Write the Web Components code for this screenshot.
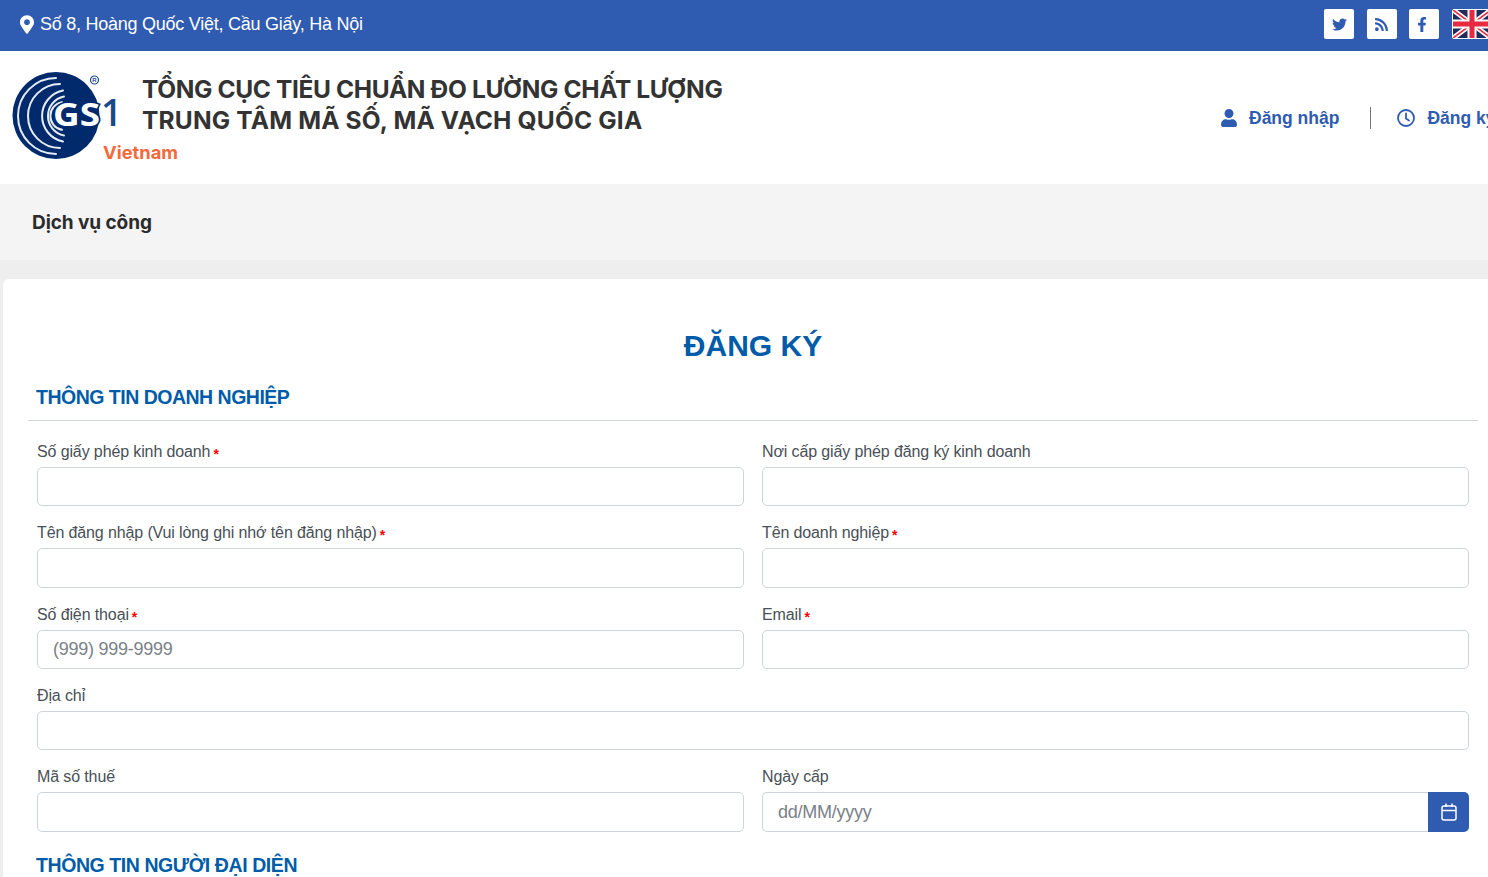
<!DOCTYPE html>
<html lang="vi"><head><meta charset="utf-8"><title>Đăng ký</title>
<style>
html,body{margin:0;padding:0;height:877px;overflow:hidden;background:#eee}
body{font-family:"Liberation Sans",Arial,sans-serif;color:#495057}
#page{width:1510px;display:block}
</style></head>
<body>
<div id="page">
<top-bar address="Số 8, Hoàng Quốc Việt, Cầu Giấy, Hà Nội"></top-bar>
<site-header></site-header>
<nav-band>Dịch vụ công</nav-band>
<form-card>
  <form-title>ĐĂNG KÝ</form-title>
  <section-head>THÔNG TIN DOANH NGHIỆP</section-head>
  <form-grid>
    <form-field label="Số giấy phép kinh doanh" required></form-field>
    <form-field label="Nơi cấp giấy phép đăng ký kinh doanh"></form-field>
    <form-field label="Tên đăng nhập (Vui lòng ghi nhớ tên đăng nhập)" required></form-field>
    <form-field label="Tên doanh nghiệp" required></form-field>
    <form-field label="Số điện thoại" required placeholder="(999) 999-9999"></form-field>
    <form-field label="Email" required></form-field>
    <form-field label="Địa chỉ" wide></form-field>
    <form-field label="Mã số thuế"></form-field>
    <form-field label="Ngày cấp" placeholder="dd/MM/yyyy" date></form-field>
  </form-grid>
  <section-head second>THÔNG TIN NGƯỜI ĐẠI DIỆN</section-head>
</form-card>
</div>
<script>
function def(name,html,init){
  customElements.define(name,class extends HTMLElement{
    constructor(){super();this.attachShadow({mode:'open'}).innerHTML=html;}
    connectedCallback(){if(init)init(this,this.shadowRoot);}
  });
}
const B='#2f5bb1';
def('top-bar',`<style>
:host{display:flex;align-items:center;justify-content:space-between;height:51px;background:${B};color:#fff;font-size:18px;padding:0 18px 0 20px;box-sizing:border-box;letter-spacing:-.25px}
.a{display:flex;align-items:center;gap:6px;margin-top:-2px}
.a svg{width:14px;height:19px;fill:#fff;display:block}
.r{display:flex;gap:12.67px;align-items:center;margin-top:-3px}
.s{width:30px;height:30px;background:#fff;border-radius:2px;display:flex;align-items:center;justify-content:center}
.s svg{fill:${B};display:block}
.s.fb svg{margin-left:-4px}
.f{width:40px;height:30px;display:block;box-sizing:border-box;border:1px solid #fff;border-radius:2px;background:#fff}
.f svg{display:block;width:100%;height:100%}
</style>
<div class="a"><svg viewBox="0 0 384 512"><path d="M172.268 501.67C26.97 291.031 0 269.413 0 192 0 85.961 85.961 0 192 0s192 85.961 192 192c0 77.413-26.97 99.031-172.268 309.67-9.535 13.774-29.93 13.773-39.464 0zM192 272c44.183 0 80-35.817 80-80s-35.817-80-80-80-80 35.817-80 80 35.817 80 80 80z"/></svg><span id="t"></span></div>
<div class="r">
<span class="s"><svg width="15" height="15" viewBox="0 0 512 512"><path d="M459.37 151.716c.325 4.548.325 9.097.325 13.645 0 138.72-105.583 298.558-298.558 298.558-59.452 0-114.68-17.219-161.137-47.106 8.447.974 16.568 1.299 25.34 1.299 49.055 0 94.213-16.568 130.274-44.832-46.132-.975-84.792-31.188-98.112-72.772 6.498.974 12.995 1.624 19.818 1.624 9.421 0 18.843-1.3 27.614-3.573-48.081-9.747-84.143-51.98-84.143-102.985v-1.299c13.969 7.797 30.214 12.67 47.431 13.319-28.264-18.843-46.781-51.005-46.781-87.391 0-19.492 5.197-37.36 14.294-52.954 51.655 63.675 129.3 105.258 216.365 109.807-1.624-7.797-2.599-15.918-2.599-24.04 0-57.828 46.782-104.934 104.934-104.934 30.213 0 57.502 12.67 76.67 33.137 23.715-4.548 46.456-13.32 66.599-25.34-7.798 24.366-24.366 44.833-46.132 57.827 21.117-2.273 41.584-8.122 60.426-16.243-14.292 20.791-32.161 39.308-52.628 54.253z"/></svg></span>
<span class="s"><svg width="13" height="15" viewBox="0 0 448 512"><path d="M128.081 415.959c0 35.369-28.672 64.041-64.041 64.041S0 451.328 0 415.959s28.672-64.041 64.041-64.041 64.04 28.673 64.04 64.041zm175.66 47.25c-8.354-154.6-132.185-278.587-286.95-286.95C7.656 175.765 0 183.105 0 192.253v48.069c0 8.415 6.49 15.472 14.887 16.018 111.832 7.284 201.473 96.702 208.772 208.772.547 8.397 7.604 14.887 16.018 14.887h48.069c9.149.001 16.489-7.655 15.995-16.79zm144.249.288C439.596 229.677 251.465 40.445 16.503 32.01 7.473 31.686 0 38.981 0 48.016v48.068c0 8.625 6.835 15.645 15.453 15.999 191.179 7.839 344.627 161.316 352.465 352.465.353 8.618 7.373 15.453 15.999 15.453h48.068c9.034-.001 16.329-7.474 16.005-16.504z"/></svg></span>
<span class="s fb"><svg width="10" height="15" viewBox="0 0 320 512"><path d="M279.14 288l14.22-92.66h-88.91v-60.13c0-25.35 12.42-50.06 52.24-50.06h40.42V6.26S260.43 0 225.36 0c-73.22 0-121.08 44.38-121.08 124.72v70.62H22.89V288h81.39v224h100.17V288z"/></svg></span>
<span class="f"><svg viewBox="0 0 38 28" preserveAspectRatio="none"><rect width="38" height="28" fill="#232a5c"/><path d="M0 0L38 28M38 0L0 28" stroke="#fff" stroke-width="5"/><path d="M0 0L38 28M38 0L0 28" stroke="#e8293f" stroke-width="1.6"/><path d="M19 0V28M0 14H38" stroke="#fff" stroke-width="9"/><path d="M19 0V28M0 14H38" stroke="#e8293f" stroke-width="5"/></svg></span>
</div>`,(h,s)=>{s.getElementById('t').textContent=h.getAttribute('address');});

def('gs-logo',`<style>:host{display:block;width:170px;height:92px}svg{display:block}</style>
<svg width="170" height="92" viewBox="0 0 170 92" style="overflow:visible">
<circle cx="44" cy="43.5" r="43.5" fill="#012a6c"/>
<g fill="none" stroke="#e6ecf5" stroke-width="2" stroke-linecap="round">
<path d="M44 6A38 38 0 0 0 44 82"/>
<path d="M48 12A32 32 0 0 0 48 76"/>
<path d="M51 18.5A26 26 0 0 0 51 69.5"/>
<path d="M52 24.4A20 20 0 0 0 52 63.6"/>
<path d="M50 30.2A14 14 0 0 0 50 57.8"/>
</g>
<text x="41" y="54" font-family="Open Sans,Liberation Sans,sans-serif" font-weight="700" font-size="32" fill="#fff" stroke="#012a6c" stroke-width="3" paint-order="stroke" textLength="47" lengthAdjust="spacingAndGlyphs">GS</text>
<text x="89" y="54" font-family="Open Sans,Liberation Sans,sans-serif" font-weight="600" font-size="37" fill="#1b4a88">1</text>
<circle cx="82.5" cy="8" r="4" fill="#fff" stroke="#1b4a88" stroke-width="1.2"/><text x="82.5" y="10.2" text-anchor="middle" font-family="Liberation Sans,sans-serif" font-weight="700" font-size="6" fill="#1b4a88">R</text>
<text x="91" y="87" font-family="Inter,Liberation Sans,sans-serif" font-weight="700" font-size="18" fill="#f26a3c" textLength="75" lengthAdjust="spacingAndGlyphs">Vietnam</text>
</svg>`);

def('site-header',`<style>
:host{display:flex;align-items:flex-start;height:133px;background:#fff;box-sizing:border-box;padding:21px 0 0 12px;position:relative}
gs-logo{flex:none}
.ttl{margin-left:-40px;padding-top:2px;font:700 24.5px/31px Inter,"Liberation Sans",sans-serif;color:#333;white-space:nowrap;width:600px}
#a{letter-spacing:-.36px}
#b{letter-spacing:.18px}
.links{margin-left:auto;display:flex;align-items:center;padding-top:35px;font:700 17.5px/22px "Liberation Sans",sans-serif;color:${B};width:289px;box-sizing:border-box}
.l{display:flex;align-items:center;gap:12px;white-space:nowrap}
.l svg{display:block}
.sep{width:1px;height:22px;background:#777;margin:0 26px 0 31px}
</style>
<gs-logo></gs-logo>
<div class="ttl"><div id="a">TỔNG CỤC TIÊU CHUẨN ĐO LƯỜNG CHẤT LƯỢNG</div><div id="b">TRUNG TÂM MÃ SỐ, MÃ VẠCH QUỐC GIA</div></div>
<div class="links">
<span class="l"><svg width="16" height="18" viewBox="0 0 448 512" fill="${B}"><path d="M224 256c70.7 0 128-57.3 128-128S294.7 0 224 0 96 57.3 96 128s57.3 128 128 128zm89.6 32h-16.7c-22.2 10.2-46.9 16-72.9 16s-50.6-5.8-72.9-16h-16.7C60.2 288 0 348.2 0 422.4V464c0 26.5 21.5 48 48 48h352c26.5 0 48-21.5 48-48v-41.6c0-74.2-60.2-134.4-134.4-134.4z"/></svg><span>Đăng nhập</span></span>
<span class="sep"></span>
<span class="l"><svg width="18" height="18" viewBox="0 0 18 18" fill="none" stroke="${B}" stroke-width="1.8"><circle cx="9" cy="9" r="8"/><path d="M9 4.5V9.5L12 11.5" stroke-linecap="round"/></svg><span>Đăng ký</span></span>
</div>`);

def('nav-band',`<style>
:host{display:flex;align-items:center;height:76px;background:#f4f4f4;padding-left:32px;font:700 19px/24px Inter,"Liberation Sans",sans-serif;color:#2b2b2b;letter-spacing:-.08px;margin-bottom:19px;padding-top:1px;box-sizing:border-box}
</style><slot></slot>`);

def('form-card',`<style>
:host{display:block;margin-left:3px;background:#fff;border-radius:6px 6px 0 0;padding:47px 0 0 25px;height:700px;width:1507px;box-sizing:border-box}
.in{width:1450px}
</style><div class="in"><slot></slot></div>`);

def('form-title',`<style>
:host{display:block;text-align:center;font:700 30px/40px "Liberation Sans",sans-serif;color:#005ca9;margin-bottom:19px}
</style><slot></slot>`);

def('section-head',`<style>
:host{display:block;font:700 19.5px/24px "Liberation Sans",sans-serif;color:#005ca9;padding:0 8px 11px;border-bottom:1px solid #ced4da;white-space:nowrap;letter-spacing:-.5px}
:host([second]){border-bottom:0;margin-top:-3px;padding-top:7px;letter-spacing:-.42px}
</style><slot></slot>`);

def('form-grid',`<style>
:host{display:grid;grid-template-columns:707px 707px;column-gap:18px;row-gap:0;padding:21px 9px 0;}
</style><slot></slot>`);

def('form-field',`<style>
:host{display:block;height:81.35px;font:16px/20px "Liberation Sans",sans-serif;color:#495057}
:host([wide]){grid-column:1/3}
.lb{height:25px;line-height:20px;letter-spacing:-.12px;white-space:nowrap;box-sizing:border-box}
.rq{color:#f00;font-size:14px;font-weight:700;margin-left:3px;letter-spacing:0;position:relative;top:2px}
.w{display:flex;height:39.3px}
input{flex:1;min-width:0;box-sizing:border-box;height:100%;border:1px solid #ced4da;border-radius:5px;background:#fff;padding:0 15px;font:18px "Liberation Sans",sans-serif;color:#495057;outline:0;letter-spacing:-.25px}
input::placeholder{color:#7a8188;opacity:1}
.cal{flex:none;width:41px;background:${B};border-radius:0 5px 5px 0;display:flex;align-items:center;justify-content:center}
.date input{border-radius:5px 0 0 5px;border-right:0}
</style>
<div class="lb"><span id="l"></span><span id="r" class="rq"></span></div>
<div class="w" id="w"><input id="i" type="text"></div>`,(h,s)=>{
  s.getElementById('l').textContent=h.getAttribute('label');
  if(h.hasAttribute('required'))s.getElementById('r').textContent='*';
  const i=s.getElementById('i');
  if(h.hasAttribute('placeholder'))i.placeholder=h.getAttribute('placeholder');
  if(h.hasAttribute('date')&&!s.querySelector('.cal')){
    const w=s.getElementById('w');w.classList.add('date');
    const c=document.createElement('span');c.className='cal';
    c.innerHTML='<svg width="16" height="18" viewBox="0 0 16 18" fill="none" stroke="#fff" stroke-width="1.5"><rect x="1" y="3" width="14" height="14" rx="2"/><path d="M1 7.5H15M5 .5V4M11 .5V4"/></svg>';
    w.appendChild(c);
  }
});
</script>
</body></html>
